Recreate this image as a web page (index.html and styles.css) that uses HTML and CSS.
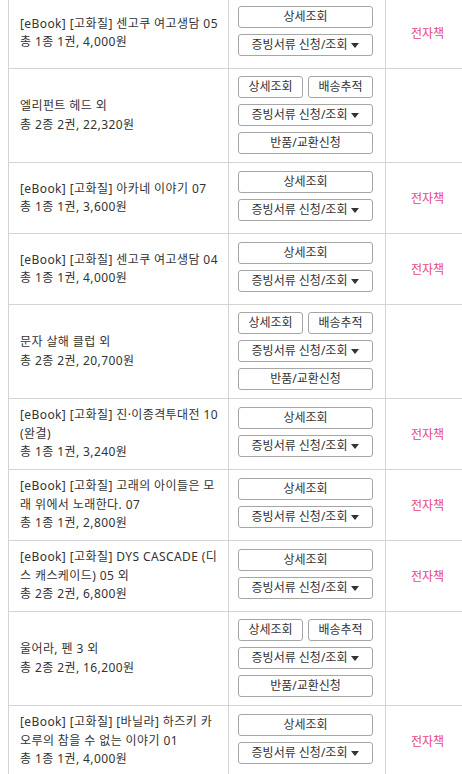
FILE: index.html
```html
<!DOCTYPE html>
<html lang="ko">
<head>
<meta charset="utf-8">
<link rel="stylesheet" href="styles.css">
</head>
<body>
<div class="orders">
  <div class="row">
    <div class="cell info"><p class="title">[eBook] [고화질] 센고쿠 여고생담 05</p><p class="sum">총 1종 1권, 4,000원</p></div>
    <div class="cell acts simple">
      <button class="btn">상세조회</button>
      <button class="btn drop">증빙서류 신청/조회 <svg class="caret" width="8" height="5" viewBox="0 0 8 5"><path d="M0 0H8L4 5Z"/></svg></button>
    </div>
    <div class="cell kind">전자책</div>
  </div>
  <div class="row">
    <div class="cell info"><p class="title">엘리펀트 헤드 외</p><p class="sum">총 2종 2권, 22,320원</p></div>
    <div class="cell acts full">
      <div class="pair"><button class="btn">상세조회</button><button class="btn">배송추적</button></div>
      <button class="btn drop">증빙서류 신청/조회 <svg class="caret" width="8" height="5" viewBox="0 0 8 5"><path d="M0 0H8L4 5Z"/></svg></button>
      <button class="btn">반품/교환신청</button>
    </div>
    <div class="cell kind"></div>
  </div>
  <div class="row">
    <div class="cell info"><p class="title">[eBook] [고화질] 아카네 이야기 07</p><p class="sum">총 1종 1권, 3,600원</p></div>
    <div class="cell acts simple">
      <button class="btn">상세조회</button>
      <button class="btn drop">증빙서류 신청/조회 <svg class="caret" width="8" height="5" viewBox="0 0 8 5"><path d="M0 0H8L4 5Z"/></svg></button>
    </div>
    <div class="cell kind">전자책</div>
  </div>
  <div class="row">
    <div class="cell info"><p class="title">[eBook] [고화질] 센고쿠 여고생담 04</p><p class="sum">총 1종 1권, 4,000원</p></div>
    <div class="cell acts simple">
      <button class="btn">상세조회</button>
      <button class="btn drop">증빙서류 신청/조회 <svg class="caret" width="8" height="5" viewBox="0 0 8 5"><path d="M0 0H8L4 5Z"/></svg></button>
    </div>
    <div class="cell kind">전자책</div>
  </div>
  <div class="row">
    <div class="cell info"><p class="title">문자 살해 클럽 외</p><p class="sum">총 2종 2권, 20,700원</p></div>
    <div class="cell acts full">
      <div class="pair"><button class="btn">상세조회</button><button class="btn">배송추적</button></div>
      <button class="btn drop">증빙서류 신청/조회 <svg class="caret" width="8" height="5" viewBox="0 0 8 5"><path d="M0 0H8L4 5Z"/></svg></button>
      <button class="btn">반품/교환신청</button>
    </div>
    <div class="cell kind"></div>
  </div>
  <div class="row">
    <div class="cell info"><p class="title">[eBook] [고화질] 진·이종격투대전 10 (완결)</p><p class="sum">총 1종 1권, 3,240원</p></div>
    <div class="cell acts simple">
      <button class="btn">상세조회</button>
      <button class="btn drop">증빙서류 신청/조회 <svg class="caret" width="8" height="5" viewBox="0 0 8 5"><path d="M0 0H8L4 5Z"/></svg></button>
    </div>
    <div class="cell kind">전자책</div>
  </div>
  <div class="row">
    <div class="cell info"><p class="title">[eBook] [고화질] 고래의 아이들은 모래 위에서 노래한다. 07</p><p class="sum">총 1종 1권, 2,800원</p></div>
    <div class="cell acts simple">
      <button class="btn">상세조회</button>
      <button class="btn drop">증빙서류 신청/조회 <svg class="caret" width="8" height="5" viewBox="0 0 8 5"><path d="M0 0H8L4 5Z"/></svg></button>
    </div>
    <div class="cell kind">전자책</div>
  </div>
  <div class="row">
    <div class="cell info"><p class="title">[eBook] [고화질] DYS CASCADE (디스 캐스케이드) 05 외</p><p class="sum">총 2종 2권, 6,800원</p></div>
    <div class="cell acts simple">
      <button class="btn">상세조회</button>
      <button class="btn drop">증빙서류 신청/조회 <svg class="caret" width="8" height="5" viewBox="0 0 8 5"><path d="M0 0H8L4 5Z"/></svg></button>
    </div>
    <div class="cell kind">전자책</div>
  </div>
  <div class="row">
    <div class="cell info"><p class="title">울어라, 펜 3 외</p><p class="sum">총 2종 2권, 16,200원</p></div>
    <div class="cell acts full">
      <div class="pair"><button class="btn">상세조회</button><button class="btn">배송추적</button></div>
      <button class="btn drop">증빙서류 신청/조회 <svg class="caret" width="8" height="5" viewBox="0 0 8 5"><path d="M0 0H8L4 5Z"/></svg></button>
      <button class="btn">반품/교환신청</button>
    </div>
    <div class="cell kind"></div>
  </div>
  <div class="row">
    <div class="cell info"><p class="title">[eBook] [고화질] [바닐라] 하즈키 카오루의 참을 수 없는 이야기 01</p><p class="sum">총 1종 1권, 4,000원</p></div>
    <div class="cell acts simple">
      <button class="btn">상세조회</button>
      <button class="btn drop">증빙서류 신청/조회 <svg class="caret" width="8" height="5" viewBox="0 0 8 5"><path d="M0 0H8L4 5Z"/></svg></button>
    </div>
    <div class="cell kind">전자책</div>
  </div>
</div>
</body>
</html>
```
FILE: styles.css
```css
html, body {
  margin: 0;
  padding: 0;
  background: #fff;
  overflow: hidden;
}
body {
  font-family: "Noto Sans", "Noto Sans CJK KR", sans-serif;
  font-size: 12px;
  color: #333;
}
.orders {
  margin: -3px 0 0 8px;
  width: 461px;
}
.row {
  display: grid;
  grid-template-columns: 220px 157px 84px;
  border-top: 1px solid #d4d4d4;
}
.cell {
  border-left: 1px solid #d4d4d4;
  box-sizing: border-box;
}
.info {
  display: flex;
  flex-direction: column;
  justify-content: center;
  padding: 0 10px 0 11px;
  line-height: 18.5px;
  letter-spacing: 0.4px;
}
.info p {
  margin: 0;
}
.acts {
  display: flex;
  flex-direction: column;
  gap: 6px;
  padding-left: 9px;
}
.acts.simple {
  padding-top: 8px;
  padding-bottom: 12px;
}
.acts.full {
  padding-top: 7px;
  padding-bottom: 8px;
}
.pair {
  display: flex;
  gap: 5px;
  width: 135px;
}
.pair .btn {
  flex: 1;
  width: auto;
}
.btn {
  width: 135px;
  height: 22px;
  box-sizing: border-box;
  margin: 0;
  padding: 0;
  border: 1px solid #a6a6a6;
  border-radius: 3px;
  background: #fff;
  font-family: inherit;
  font-size: 12px;
  color: #333;
  line-height: 20px;
  display: flex;
  align-items: center;
  justify-content: center;
}
.drop {
  gap: 4px;
}
.caret {
  fill: #333;
  display: block;
}
.kind {
  display: flex;
  align-items: center;
  justify-content: center;
  color: #e8447c;
}
```
